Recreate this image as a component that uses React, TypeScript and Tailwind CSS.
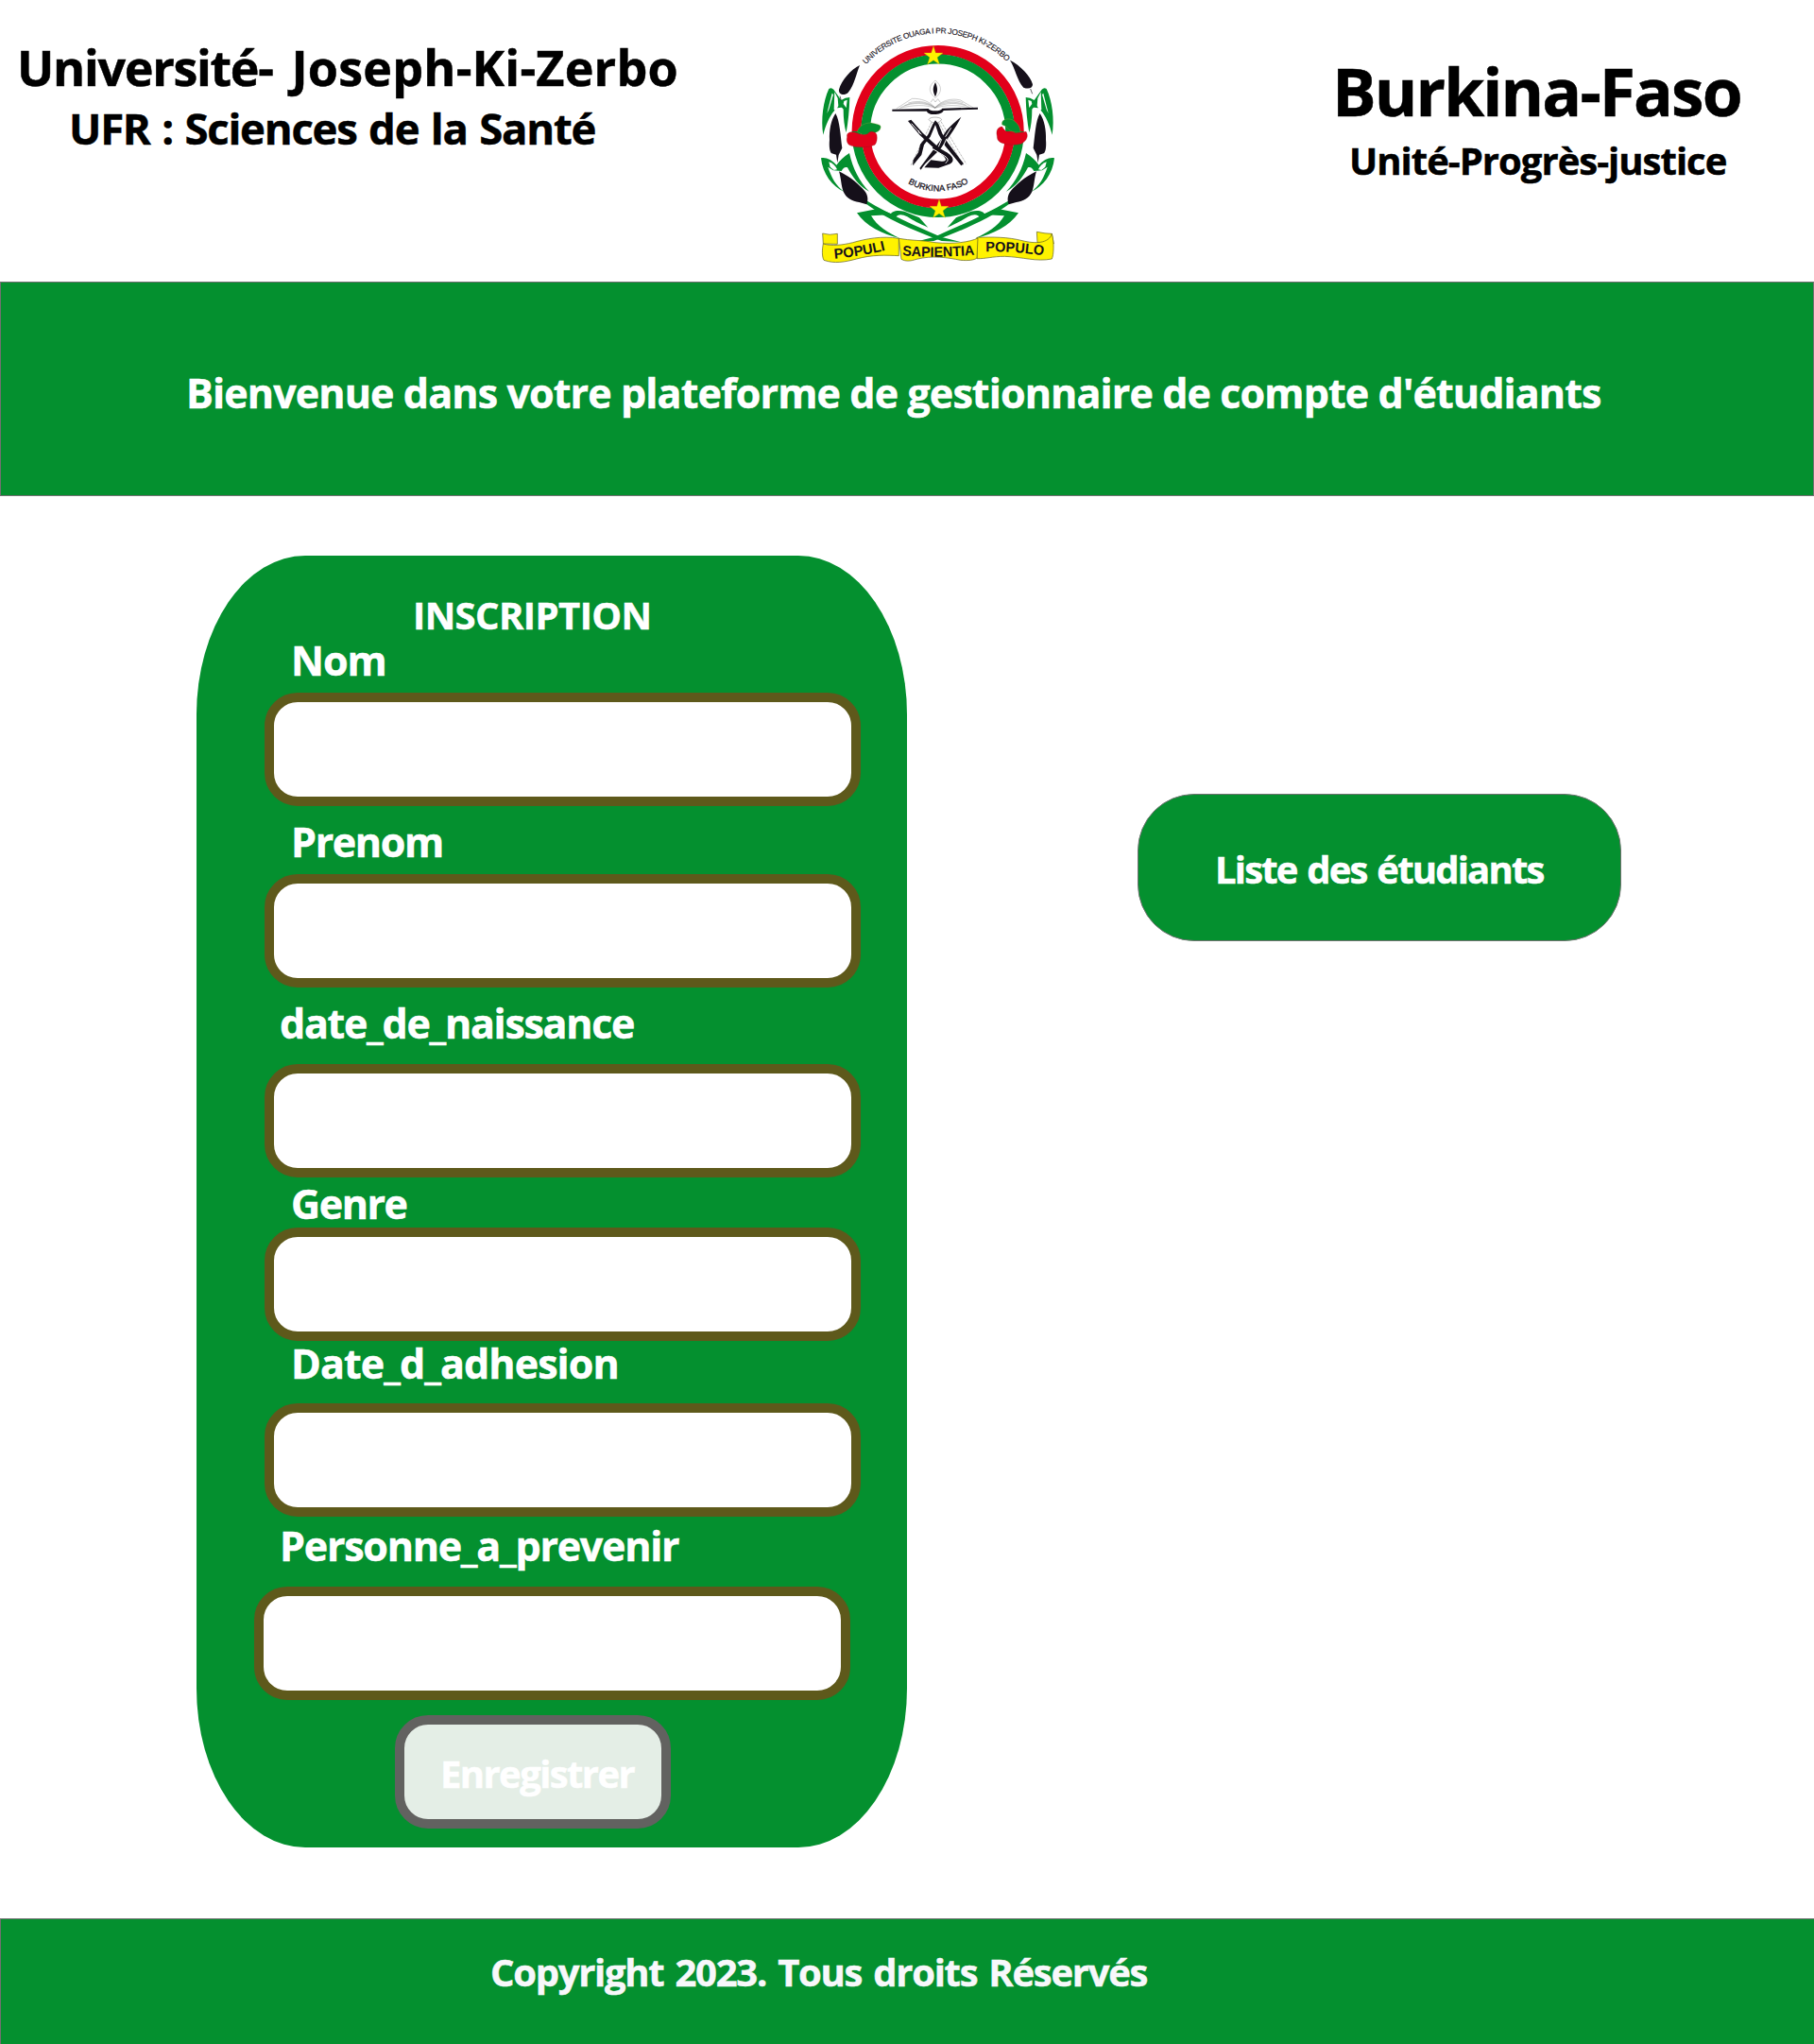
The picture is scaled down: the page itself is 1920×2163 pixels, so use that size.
const fieldBase =
  "block h-[120px] w-[631px] shrink-0 rounded-[35px] border-[10px] border-[#5e591b] bg-white outline-none";

type Field = { name: string; label: string; labelClass: string; inputClass: string };

const fields: Field[] = [
  { name: "nom", label: "Nom", labelClass: "mt-[6px] ml-[100px] tracking-[-0.99px]", inputClass: "mt-[13px] ml-[72px]" },
  { name: "prenom", label: "Prenom", labelClass: "mt-4 ml-[100px] tracking-[-1.36px]", inputClass: "mt-[13px] ml-[72px]" },
  { name: "naissance", label: "date_de_naissance", labelClass: "mt-4 ml-[88px] tracking-[-1.29px]", inputClass: "mt-[22px] ml-[72px]" },
  { name: "genre", label: "Genre", labelClass: "mt-[6px] ml-[100px] tracking-[-1.45px]", inputClass: "mt-1 ml-[72px]" },
  { name: "adhesion", label: "Date_d_adhesion", labelClass: "mt-[2px] ml-[100px] tracking-[-0.92px]", inputClass: "mt-[21px] ml-[72px]" },
  { name: "prevenir", label: "Personne_a_prevenir", labelClass: "mt-[9px] ml-[88px] tracking-[-1.25px]", inputClass: "mt-[22px] ml-[61px]" },
];

function Star({ x, y }: { x: number; y: number }) {
  return (
    <path
      transform={`translate(${x} ${y})`}
      d="M0,-31 L7,-9 L30,-9 L12,5 L19,27 L0,14 L-19,27 L-12,5 L-30,-9 L-7,-9Z"
      fill="#fff200"
      stroke="#c9b400"
      strokeWidth="1"
    />
  );
}

/* Leaves, seeds and stem of one side, drawn for the left half. */
function Sprig() {
  return (
    <>
      <g fill="#04902f">
        <path d="M64,398 C56,350 64,290 82,252 Q90,246 97,254 L121,288 Q134,279 148,279 C147,320 143,358 137,391 C131,372 128,346 128,317 C122,305 115,315 106,312 L99,322 C84,340 72,366 64,398Z" />
        <path d="M57,472 C72,468 92,478 106,494 Q122,472 147,456 C158,505 178,545 210,578 C176,560 156,530 141,502 C132,498 126,506 122,513 L96,511 L79,500 C90,533 104,560 131,579 C92,562 62,522 57,472Z" />
        <path d="M204,608 C270,648 350,684 438,722 L500,738 L440,735 C350,702 262,664 198,616Z" />
        <path d="M171,646 L240,632 L285,651 L216,655 C236,690 270,708 308,727 C250,712 200,688 171,646Z" />
        <path d="M275,655 C282,634 315,636 340,649 L369,661 C380,672 386,682 397,692 C368,680 350,670 331,658 C312,648 298,650 292,664Z" />
      </g>
      <g fill="#fff">
        <path d="M92,266 L96,270 L82,318 L76,330Z" />
        <path d="M100,262 L110,282 L112,306 L104,322 L98,318Z" />
        <path d="M140,287 L137,312 L128,300 L130,291Z" />
        <path d="M82,484 C94,488 104,498 108,508 L98,510 L86,500Z" />
      </g>
      <g fill="#15101a">
        <path d="M103,330 C88,352 83,384 84,414 C82,436 85,453 91,457 L105,461 L109,487 L113,462 L119,450 L124,440 C119,405 117,352 103,330Z" />
        <path d="M114,514 C121,536 121,562 128,578 C136,598 156,608 178,612 L202,619 C208,603 205,588 196,577 C178,556 153,533 114,514Z" />
      </g>
    </>
  );
}

function Emblem() {
  return (
    <svg
      viewBox="0 0 870 840"
      className="mt-[10px] h-[280px] w-[290px] shrink-0 font-normal [-webkit-text-stroke:0]"
      role="img"
      aria-label="Emblème de l'université"
    >
      <defs>
        <path id="arc-top" d="M115,389 A313,313 0 0 1 741,389" />
        <path id="arc-low" d="M238,387 A190,190 0 0 0 618,387" />
        <path id="rib-left" d="M100,791 Q180,784 265,764" />
        <path id="rib-mid" d="M315,781 Q430,790 548,779" />
        <path id="rib-right" d="M580,769 Q680,768 768,782" />
      </defs>

      <g fontFamily="Liberation Sans, Arial, sans-serif" fill="#15101a" stroke="#15101a">
        <text fontSize="25" strokeWidth="0.4">
          <textPath href="#arc-top" startOffset="236" textLength="498">UNIVERSITE OUAGA I PR JOSEPH KI-ZERBO</textPath>
        </text>
        <text fontSize="27" strokeWidth="0.8">
          <textPath href="#arc-low" startOffset="199" textLength="202">BURKINA FASO</textPath>
        </text>
      </g>

      <Sprig />
      <g transform="translate(855 0) scale(-1 1)">
        <Sprig />
      </g>
      <g fill="#15101a">
        <path d="M180,177 C152,190 122,226 114,254 C112,270 130,276 143,264 C164,238 168,206 180,177Z" />
        <path d="M657,161 C690,178 722,210 729,238 C729,250 716,254 700,248 C680,226 674,188 657,161Z" />
      </g>
      <path d="M117,275 L121,289 M722,252 L728,268" stroke="#15101a" strokeWidth="2" />

      <g fill="none" strokeWidth="29.5">
        <path d="M169.500,387 A258.500,258.500 0 0 1 686.500,387" stroke="#e2001a" />
        <path d="M198.500,387 A229.500,229.500 0 0 1 657.500,387" stroke="#04902f" />
        <path d="M169.500,387 A258.500,258.500 0 0 0 686.500,387" stroke="#04902f" />
        <path d="M198.500,387 A229.500,229.500 0 0 0 657.500,387" stroke="#e2001a" />
      </g>
      <g strokeWidth="1">
        <path d="M172,388 C180,366 198,360 216,360 C236,364 250,366 246,376 C244,388 230,392 214,396 L190,398Z" fill="#04902f" stroke="#9aa83a" />
        <path d="M140,405 C136,388 156,386 172,392 C190,401 202,400 210,390 C216,386 230,388 234,398 C236,412 234,422 228,430 C206,440 166,440 146,430 C138,422 138,412 140,405Z" fill="#e2001a" stroke="#8b1a1a" />
        <path d="M632,366 C628,350 646,344 664,350 C680,358 690,374 690,390 C672,392 652,386 646,372Z" fill="#04902f" stroke="#9aa83a" />
        <path d="M616,402 C612,384 618,374 632,372 C636,378 642,388 652,391 C672,396 690,390 708,388 C716,400 712,416 694,426 C668,434 634,428 624,420 C618,416 616,410 616,402Z" fill="#e2001a" stroke="#8b1a1a" />
      </g>
      <Star x={414} y={147} />
      <Star x={432} y={634} />

      <path d="M420,225 C397,243 397,263 420,281 C442,263 442,243 420,225Z" fill="#fff" stroke="#777" strokeWidth="1" />
      <path d="M420,231 C411,251 411,258 420,277 C428,258 428,251 420,231Z" fill="#15101a" />
      <g fill="none" stroke="#666" strokeWidth="1">
        <path d="M296,315 L346,283 C375,282 402,292 419,312 C438,290 470,280 500,288 L542,313" />
        <path d="M310,311 C350,292 390,296 419,312 C450,296 492,292 530,311" />
        <path d="M322,305 C360,288 398,296 419,312 C442,294 482,288 518,304" />
        <path d="M305,314 C350,302 390,302 419,313 C452,302 494,302 536,314" />
        <path d="M334,297 C372,286 400,296 419,312 C440,291 476,284 508,296" />
        <path d="M405,295 L413,284 L420,294 L428,284 L436,295" />
      </g>
      <path d="M283,317 L398,315 Q402,322 419,322 Q437,322 442,314 L555,311 L555,317 L446,321 C442,336 396,338 393,323 L283,323Z" fill="#15101a" />

      <g stroke="#777" strokeWidth="1.500" fill="none" strokeDasharray="8 3">
        <path d="M408,358 L342,496 M414,362 L352,494 M430,358 L508,494 M438,356 L518,490" />
        <path d="M399,349 C404,340 434,340 440,349 C436,356 430,360 420,360 C410,360 404,356 399,349Z" strokeDasharray="none" />
      </g>
      <g fill="#15101a">
        <path d="M333,354 L343,350 L380,392 L428,436 L422,446 L370,398Z" />
        <path d="M502,341 C470,366 452,384 440,410 L370,504 L374,509 C392,480 420,462 438,440 C464,402 486,374 502,341Z" />
        <path d="M411,366 L420,352 L430,364 L442,394 L460,424 L510,490 L502,496 L450,432 L430,396 L420,366 L404,404 L384,430 L376,462 L348,496 L350,478 L366,454 L372,428 L398,396Z" />
        <path d="M385,502 L406,478 L440,482 C460,484 456,470 434,456 L410,440 L418,432 L446,448 C482,466 484,486 460,493 L430,503Z" />
      </g>
      <g stroke="#fff" strokeWidth="3" fill="none">
        <path d="M344,362 L376,397 M366,384 L370,394" />
        <path d="M470,376 L452,404 M456,410 L444,436 M440,412 L430,436" />
        <path d="M414,444 L444,462 C458,470 466,478 452,488" />
      </g>

      <g fill="#fff200" stroke="#5b5a20" strokeWidth="2" strokeLinejoin="round">
        <path d="M64,744 L62,711 Q84,718 109,712 L109,745Z" />
        <path d="M796,744 L790,712 Q770,712 742,706 L744,740Z" />
        <path d="M64,744 C60,762 60,786 66,796 C100,808 132,802 170,792 C220,778 264,780 304,782 L304,727 C250,718 200,728 158,740 C124,748 92,752 64,744Z" />
        <path d="M790,712 C798,740 796,780 790,792 C740,802 700,786 640,784 C600,784 580,792 552,791 L552,724 C600,722 650,722 696,734 C736,744 780,744 790,712Z" />
        <path d="M304,727 L312,793 C324,800 340,800 360,793 C410,780 460,788 500,796 C524,798 544,796 552,789 L555,726 C530,738 480,746 420,740 C380,732 340,734 304,727Z" />
      </g>
      <g fontFamily="Liberation Sans, Arial, sans-serif" fontWeight="700" fontSize="45" fill="#15101a">
        <text>
          <textPath href="#rib-left" textLength="164" lengthAdjust="spacingAndGlyphs">POPULI</textPath>
        </text>
        <text>
          <textPath href="#rib-mid" textLength="230" lengthAdjust="spacingAndGlyphs">SAPIENTIA</textPath>
        </text>
        <text>
          <textPath href="#rib-right" textLength="184" lengthAdjust="spacingAndGlyphs">POPULO</textPath>
        </text>
      </g>
    </svg>
  );
}

export default function App() {
  return (
    <div className="flex h-[2163px] w-[1920px] flex-col overflow-hidden bg-white font-['Open_Sans','Noto_Sans',sans-serif] font-bold whitespace-nowrap text-black [-webkit-text-stroke:0.5px_currentColor]">
      <header className="flex h-[298px] shrink-0">
        <div className="flex w-[850px] shrink-0 flex-col items-start pt-[45px]">
          <h1 className="ml-[18px] text-[52px] leading-none tracking-[0.2px] [word-spacing:6px]">
            <span className="tracking-[-1.3px]">Université-</span> Joseph-Ki-Zerbo
          </h1>
          <h2 className="mt-4 ml-[73px] text-[45.5px] leading-none tracking-[-1.25px] [word-spacing:2px]">UFR : Sciences de la Santé</h2>
        </div>
        <Emblem />
        <div className="flex flex-col items-start pt-[62px] pl-[270px]">
          <p className="text-[69.5px] leading-none tracking-[-1.93px]">Burkina-Faso</p>
          <p className="mt-[18px] ml-[18px] text-[40px] leading-none tracking-[-0.98px]">Unité-Progrès-justice</p>
        </div>
      </header>

      <section className="flex h-[227px] shrink-0 items-start border border-[#707070] bg-[#04902f] pt-[95px] pl-[196px]">
        <p className="text-[43px] leading-none tracking-[-0.88px] text-white">
          Bienvenue dans votre plateforme de gestionnaire de compte d'étudiants
        </p>
      </section>

      <main className="flex grow items-start pt-[63px] pl-[208px]">
        <form
          className="flex h-[1367px] w-[752px] shrink-0 flex-col items-start rounded-[115px/168px] bg-[#04902f] text-white"
          onSubmit={(e) => e.preventDefault()}
        >
          <h2 className="mt-[43px] ml-[229px] text-[40px] leading-none tracking-[-0.57px]">INSCRIPTION</h2>
          {fields.map((f) => (
            <label key={f.name} className="flex flex-col items-start">
              <span className={`${f.labelClass} text-[43px] leading-none`}>{f.label}</span>
              <input name={f.name} className={`${f.inputClass} ${fieldBase}`} />
            </label>
          ))}
          <button
            type="submit"
            className="mt-4 ml-[210px] flex h-[120px] w-[292px] shrink-0 items-start rounded-[35px] border-[10px] border-[#626260] bg-[#e4eee6] pt-[32px] pl-[38px]"
          >
            <span className="text-[40px] leading-none tracking-[-1.59px]">Enregistrer</span>
          </button>
        </form>

        <a
          href="#liste"
          className="mt-[252px] ml-[244px] flex h-[156px] w-[512px] shrink-0 items-start rounded-[60px] border border-[#707070] bg-[#04902f] pt-[59px] pl-[81px] text-[40px] leading-none tracking-[-1.8px] text-white [word-spacing:2px]"
        >
          Liste des étudiants
        </a>
      </main>

      <footer className="h-[133px] shrink-0 border-t border-l border-[#707070] bg-[#04902f] pt-[36px] pl-[518px] text-[#f8f8fb]">
        <p className="text-[40px] leading-none tracking-[-1.28px] [word-spacing:3px]">Copyright 2023. Tous droits Réservés</p>
      </footer>
    </div>
  );
}
